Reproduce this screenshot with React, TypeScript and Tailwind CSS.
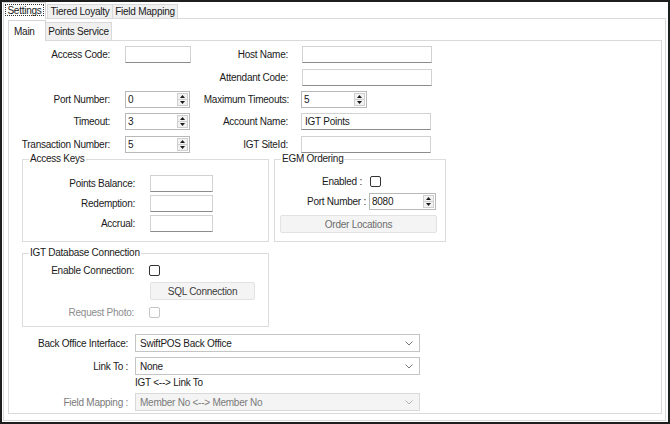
import React from 'react';

type BoxProps = { value?: string; className?: string };

const TextBox: React.FC<BoxProps> = ({ value = '', className = '' }) => (
  <div
    className={`h-[17px] border border-[#d2d2d2] border-b-[#8c8c8c] bg-white pl-[3px] leading-[15px] ${className}`}
  >
    {value}
  </div>
);

const Arrow: React.FC<{ up?: boolean }> = ({ up }) => (
  <svg width="5" height="3" viewBox="0 0 5 3">
    <path d={up ? 'M0 3 L2.5 0 L5 3 Z' : 'M0 0 L2.5 3 L5 0 Z'} fill="#1a1a1a" />
  </svg>
);

const Spinner: React.FC<BoxProps> = ({ value = '', className = '' }) => (
  <div className={`flex h-[17px] border border-[#b9b9b9] bg-white ${className}`}>
    <span className="flex-1 pl-[2px] leading-[15px]">{value}</span>
    <div className="my-[1px] mr-[1px] flex w-[11px] flex-col border border-[#cfcfcf] bg-[#f2f2f2]">
      <div className="flex flex-1 items-center justify-center border-b border-[#cfcfcf]">
        <Arrow up />
      </div>
      <div className="flex flex-1 items-center justify-center">
        <Arrow />
      </div>
    </div>
  </div>
);

const CheckBox: React.FC<{ disabled?: boolean }> = ({ disabled }) => (
  <span
    className={`block h-[11px] w-[11px] rounded-[2px] border bg-white ${
      disabled ? 'border-[#c6c6c6]' : 'border-[#333333]'
    }`}
  />
);

const Button: React.FC<{ label: string; className?: string }> = ({ label, className = '' }) => (
  <div
    className={`flex h-[18px] items-center justify-center rounded-[2px] border border-[#e2e2e2] bg-[#f4f4f4] ${className}`}
  >
    {label}
  </div>
);

const Select: React.FC<{ value: string; disabled?: boolean }> = ({ value, disabled }) => (
  <div
    className={`ml-[7px] flex h-[18px] w-[285px] items-center justify-between border pl-[4px] pr-[6px] ${
      disabled ? 'border-[#d9d9d9] bg-[#f4f4f4] text-[#7a7a7a]' : 'border-[#c4c4c4] bg-white'
    }`}
  >
    <span>{value}</span>
    <svg width="8" height="5" viewBox="0 0 8 5">
      <path d="M0.5 0.5 L4 4 L7.5 0.5" fill="none" stroke={disabled ? '#b0b0b0' : '#7a7a7a'} />
    </svg>
  </div>
);

const Label: React.FC<{ text: string; className?: string }> = ({ text, className = '' }) => (
  <span className={`shrink-0 whitespace-nowrap text-right ${className}`}>{text}</span>
);

const Group: React.FC<{ title: string; className?: string; children: React.ReactNode }> = ({
  title,
  className = '',
  children,
}) => (
  <fieldset className={`border border-[#dcdcdc] ${className}`}>
    <legend className="ml-[6px] px-[1px] leading-[12px]">{title}</legend>
    {children}
  </fieldset>
);

export default function App() {
  return (
    <div className="h-[424px] w-[670px] overflow-hidden border-2 border-[#1e1e1e] bg-white font-['Liberation_Sans',Arial,sans-serif] text-[10px] tracking-[-0.25px] text-[#1a1a1a]">
      {/* outer tabs */}
      <div className="flex h-[16px] items-end pl-[1px]">
        <div className="relative z-10 -mb-[1px] flex h-[17px] w-[43px] items-start border border-b-0 border-[#d4d4d4] bg-white pt-[1px]">
          <span className="mx-[1px] flex h-[12px] w-full items-center justify-center border border-dotted border-[#333333]">
            Settings
          </span>
        </div>
        <div className="ml-[1px] flex h-[14px] w-[66px] items-center justify-center border border-b-0 border-[#d9d9d9] bg-[#f0f0f0]">
          Tiered Loyalty
        </div>
        <div className="flex h-[14px] w-[65px] items-center justify-center border border-b-0 border-l-0 border-[#d9d9d9] bg-[#f0f0f0]">
          Field Mapping
        </div>
      </div>

      <div className="ml-[1px] h-[403px] w-[663px] border border-[#dadada] bg-white">
        {/* inner tabs */}
        <div className="mt-[1px] flex h-[20px] items-end pl-[4px]">
          <div className="relative z-10 -mb-[1px] flex h-[21px] w-[38px] items-center border border-b-0 border-[#d4d4d4] bg-white pl-[5px]">
            Main
          </div>
          <div className="flex h-[18px] w-[66px] items-center justify-center border border-b-0 border-l-0 border-[#d9d9d9] bg-[#f0f0f0]">
            Points Service
          </div>
        </div>

        <div className="ml-[4px] flex h-[374px] w-[654px] flex-col border border-[#dadada]">
          {/* top fields */}
          <div className="mt-[5px] flex h-[17px] items-center">
            <Label text="Access Code:" className="w-[101px]" />
            <TextBox className="ml-[15px] w-[66px]" />
            <Label text="Host Name:" className="w-[97px]" />
            <TextBox className="ml-[14px] w-[130px]" />
          </div>
          <div className="mt-[6px] flex h-[17px] items-center">
            <span className="w-[279px] shrink-0 text-right">Attendant Code:</span>
            <TextBox className="ml-[14px] w-[130px]" />
          </div>
          <div className="mt-[5px] flex h-[17px] items-center">
            <Label text="Port Number:" className="w-[101px]" />
            <Spinner value="0" className="ml-[15px] w-[65px]" />
            <Label text="Maximum Timeouts:" className="w-[99px]" />
            <Spinner value="5" className="ml-[12px] w-[66px]" />
          </div>
          <div className="mt-[5px] flex h-[17px] items-center">
            <Label text="Timeout:" className="w-[101px]" />
            <Spinner value="3" className="ml-[15px] w-[65px]" />
            <Label text="Account Name:" className="w-[98px]" />
            <TextBox value="IGT Points" className="ml-[13px] w-[130px]" />
          </div>
          <div className="mt-[6px] flex h-[17px] items-center">
            <Label text="Transaction Number:" className="w-[101px]" />
            <Spinner value="5" className="ml-[15px] w-[65px]" />
            <Label text="IGT SiteId:" className="w-[98px]" />
            <TextBox className="ml-[13px] w-[130px]" />
          </div>

          {/* group boxes */}
          <div className="flex items-stretch">
            <Group title="Access Keys" className="ml-[13px] w-[247px] pb-[8px] pt-[10px]">
              <div className="flex flex-col gap-[3px]">
                {['Points Balance:', 'Redemption:', 'Accrual:'].map((l) => (
                  <div key={l} className="flex h-[17px] items-center">
                    <Label text={l} className="w-[112px]" />
                    <TextBox className="ml-[15px] w-[63px]" />
                  </div>
                ))}
              </div>
            </Group>
            <Group title="EGM Ordering" className="ml-[5px] w-[172px] pb-[8px] pt-[10px]">
              <div className="flex h-[13px] items-center">
                <Label text="Enabled :" className="w-[87px]" />
                <span className="ml-[8px]">
                  <CheckBox />
                </span>
              </div>
              <div className="mt-[5px] flex h-[17px] items-center">
                <Label text="Port Number :" className="w-[91px]" />
                <Spinner value="8080" className="ml-[3px] w-[67px]" />
              </div>
              <Button label="Order Locations" className="ml-[5px] mt-[5px] w-[157px] text-[#6d6d6d]" />
            </Group>
          </div>

          <Group title="IGT Database Connection" className="ml-[13px] mt-[5px] w-[247px] pb-[7px] pt-[5px]">
            <div className="flex h-[13px] items-center">
              <Label text="Enable Connection:" className="w-[111px]" />
              <span className="ml-[15px]">
                <CheckBox />
              </span>
            </div>
            <Button label="SQL Connection" className="ml-[127px] mt-[5px] w-[105px] text-[#3a3a3a]" />
            <div className="mt-[6px] flex h-[13px] items-center text-[#8c8c8c]">
              <Label text="Request Photo:" className="w-[111px]" />
              <span className="ml-[15px]">
                <CheckBox disabled />
              </span>
            </div>
          </Group>

          {/* bottom selects */}
          <div className="mt-[7px] flex h-[18px] items-center">
            <Label text="Back Office Interface:" className="w-[119px]" />
            <Select value="SwiftPOS Back Office" />
          </div>
          <div className="mt-[5px] flex h-[18px] items-center">
            <Label text="Link To :" className="w-[119px]" />
            <Select value="None" />
          </div>
          <div className="mt-[2px] h-[12px] pl-[126px] leading-[12px]">IGT &lt;--&gt; Link To</div>
          <div className="mt-[4px] flex h-[18px] items-center">
            <Label text="Field Mapping :" className="w-[119px] text-[#7a7a7a]" />
            <Select value="Member No <--> Member No" disabled />
          </div>
        </div>
      </div>
    </div>
  );
}
